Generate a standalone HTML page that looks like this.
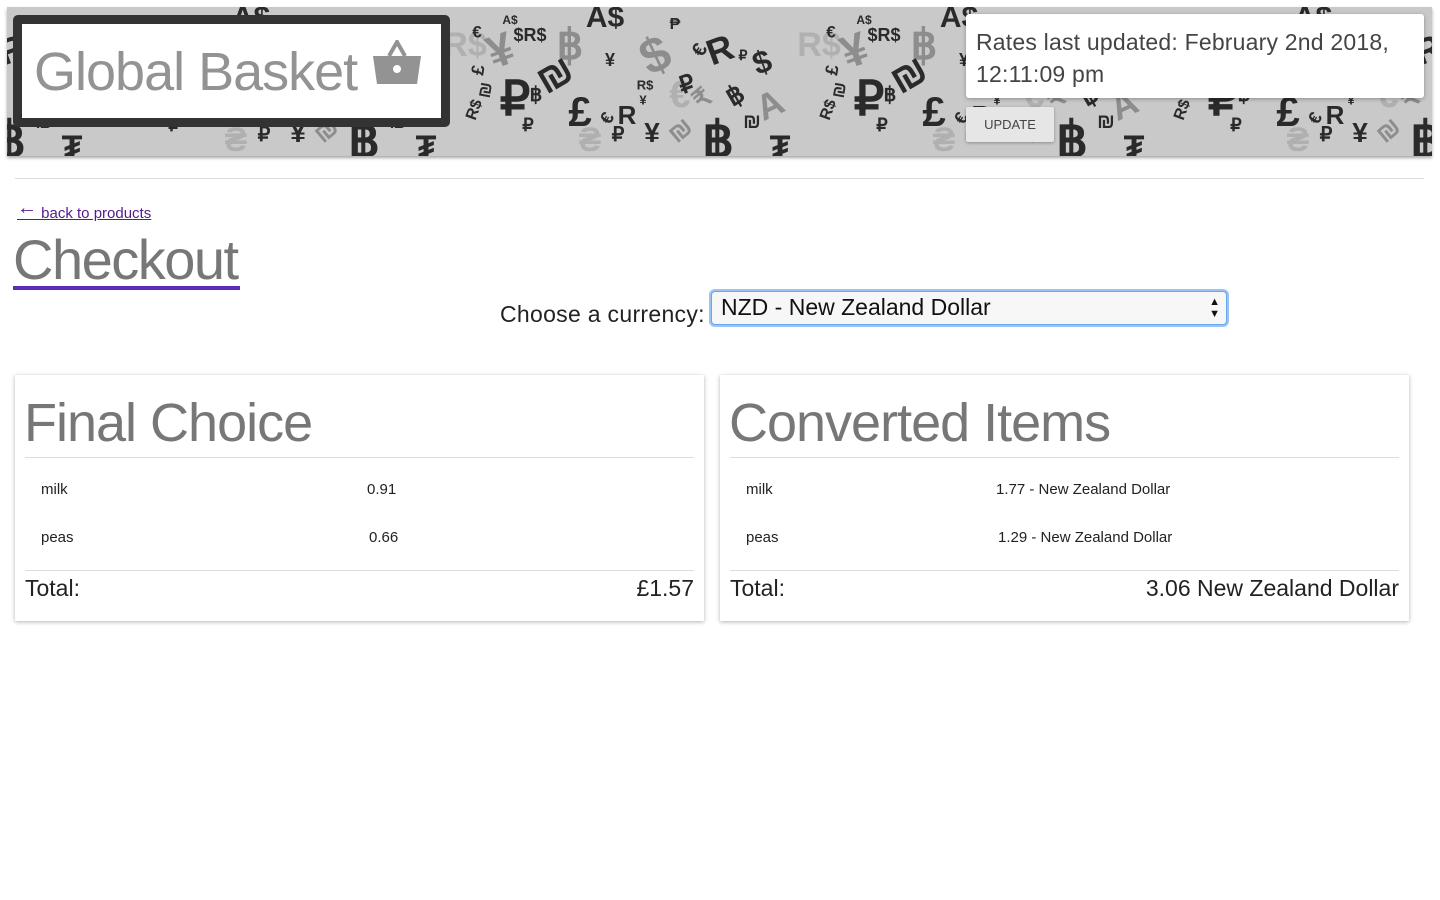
<!DOCTYPE html>
<html><head><meta charset="utf-8">
<style>
*{box-sizing:border-box;margin:0;padding:0}
body{width:1440px;height:900px;background:#fff;font-family:"Liberation Sans",sans-serif;position:relative;overflow:hidden;color:#222}
.hdr{position:absolute;left:7px;top:7px;width:1425px;height:149px;background:#c9c9c9;overflow:hidden;box-shadow:0 2px 3px rgba(0,0,0,.35)}
.tile{position:absolute;top:-7px;width:354px;height:160px}
.tile span{position:absolute;line-height:1;transform:translate(-50%,-50%);font-weight:bold;white-space:nowrap}
.d{color:#2a2a2a}.g{color:#8d8d8d}.l{color:#b0b0b0}
.title{position:absolute;left:13px;top:15px;width:437px;height:112px;border:9px solid #333;border-radius:5px;background:#fff}
.title .t{position:absolute;left:12px;top:16px;font-size:54px;color:#939393;letter-spacing:-1px}
.rates{position:absolute;left:966px;top:14px;width:458px;height:84px;background:#fff;border-radius:3px;box-shadow:0 1px 4px rgba(0,0,0,.3);padding:12px 10px;font-size:23px;line-height:32px;color:#444;letter-spacing:.2px}
.upd{position:absolute;left:966px;top:107px;width:88px;height:35px;background:#e6e6e6;border-radius:2px;box-shadow:0 1px 3px rgba(0,0,0,.3);font-size:13px;color:#444;text-align:center;line-height:35px}
.hr{position:absolute;height:1px;background:#ddd}
a{color:#551a8b}
.back{position:absolute;left:17px;top:201px;font-size:15px}
.back span{position:relative;top:-4px}
.chk{position:absolute;left:13px;top:231px;font-size:56px;color:#777;line-height:58px;letter-spacing:-1.5px}
.chk u{position:absolute;left:0;top:55px;width:227px;height:4px;background:#5b2dbf}
.lbl{position:absolute;left:500px;top:301px;font-size:23px;color:#222;letter-spacing:.3px}
.sel{position:absolute;left:711px;top:291px;width:516px;height:34px;border:1px solid #6aa6f0;box-shadow:0 0 0 2px #9cc3f5;border-radius:4px;background:#f7f7f7;font-size:23px;padding:2px 9px;color:#111}
.sel i{position:absolute;right:6px;top:4px;font-style:normal;font-size:11px;line-height:12px;color:#111}
.card{position:absolute;top:375px;width:689px;height:246px;background:#fff;box-shadow:0 1px 4px rgba(0,0,0,.3)}
.card h2{position:absolute;left:9px;top:17px;font-size:54px;font-weight:normal;color:#777;letter-spacing:-1px}
.card .l1{position:absolute;left:10px;right:10px;top:82px;height:1px;background:#ddd}
.card .l2{position:absolute;left:10px;right:10px;top:195px;height:1px;background:#ddd}
.card .c{position:absolute;font-size:15px;color:#222}
.card .tot{position:absolute;top:200px;font-size:23px;color:#222}
</style></head><body>
<div class="hdr">
<div class="tile" style="left:-275px">
<span class="l" style="left:25px;top:45px;font-size:34px">R$</span><span class="g" style="left:60px;top:50px;font-size:46px;transform:translate(-50%,-50%) rotate(-20deg)">¥</span><span class="d" style="left:37px;top:32px;font-size:17px">€</span><span class="d" style="left:70px;top:20px;font-size:12px">A$</span><span class="d" style="left:90px;top:35px;font-size:18px">$R$</span><span class="g" style="left:130px;top:45px;font-size:42px">฿</span><span class="d" style="left:115px;top:75px;font-size:40px;transform:translate(-50%,-50%) rotate(-30deg)">₪</span><span class="d" style="left:170px;top:60px;font-size:18px">¥</span><span class="d" style="left:165px;top:18px;font-size:30px">A$</span><span class="g" style="left:215px;top:55px;font-size:50px;transform:translate(-50%,-50%) rotate(-25deg)">$</span><span class="d" style="left:235px;top:25px;font-size:16px">₱</span><span class="d" style="left:260px;top:50px;font-size:20px;transform:translate(-50%,-50%) rotate(-60deg)">€</span><span class="d" style="left:280px;top:50px;font-size:36px;transform:translate(-50%,-50%) rotate(-20deg)">R</span><span class="d" style="left:303px;top:55px;font-size:14px">₽</span><span class="d" style="left:322px;top:62px;font-size:32px;transform:translate(-50%,-50%) rotate(-20deg)">$</span><span class="l" style="left:240px;top:95px;font-size:38px">€</span><span class="d" style="left:75px;top:100px;font-size:48px">₽</span><span class="d" style="left:96px;top:95px;font-size:20px">฿</span><span class="d" style="left:140px;top:112px;font-size:42px">£</span><span class="d" style="left:38px;top:70px;font-size:18px;transform:translate(-50%,-50%) rotate(-80deg)">£</span><span class="d" style="left:45px;top:90px;font-size:18px;transform:translate(-50%,-50%) rotate(-80deg)">₪</span><span class="d" style="left:35px;top:110px;font-size:16px;transform:translate(-50%,-50%) rotate(-70deg)">R$</span><span class="d" style="left:205px;top:85px;font-size:13px">R$</span><span class="d" style="left:203px;top:100px;font-size:13px">¥</span><span class="d" style="left:187px;top:115px;font-size:26px">R</span><span class="d" style="left:167px;top:118px;font-size:18px;transform:translate(-50%,-50%) rotate(-60deg)">€</span><span class="d" style="left:247px;top:85px;font-size:24px;transform:translate(-50%,-50%) rotate(-20deg)">₽</span><span class="g" style="left:262px;top:98px;font-size:26px;transform:translate(-50%,-50%) rotate(-40deg)">₹</span><span class="d" style="left:295px;top:95px;font-size:26px;transform:translate(-50%,-50%) rotate(-30deg)">฿</span><span class="d" style="left:278px;top:140px;font-size:50px">฿</span><span class="d" style="left:312px;top:122px;font-size:20px">₪</span><span class="g" style="left:240px;top:130px;font-size:26px;transform:translate(-50%,-50%) rotate(-40deg)">₪</span><span class="d" style="left:212px;top:133px;font-size:28px">¥</span><span class="d" style="left:178px;top:135px;font-size:20px">₽</span><span class="d" style="left:88px;top:125px;font-size:18px">₽</span><span class="d" style="left:340px;top:148px;font-size:34px">₮</span><span class="g" style="left:330px;top:105px;font-size:36px;transform:translate(-50%,-50%) rotate(-25deg)">A</span><span class="l" style="left:150px;top:140px;font-size:34px">₴</span>
</div>
</div>
<div class="title"><div class="t">Global Basket <svg width="52" height="46" viewBox="0 0 52 46" style="vertical-align:4px"><path d="M18 16 L26 2 L34 16" stroke="#939393" stroke-width="4" fill="none"/><path d="M2 16 H50 L46 44 H6 Z" fill="#939393"/><circle cx="26" cy="29" r="4" fill="#fff"/></svg></div></div>
<div class="rates">Rates last updated: February 2nd 2018, 12:11:09 pm</div>
<div class="upd">UPDATE</div>
<div class="hr" style="left:15px;top:178px;width:1409px"></div>
<a class="back" href="#"><span style="font-size:20px">←</span> back to products</a>
<div class="chk">Checkout<u></u></div>
<div class="lbl">Choose a currency:</div>
<div class="sel">NZD - New Zealand Dollar<i>▲<br>▼</i></div>
<div class="card" style="left:15px"><h2>Final Choice</h2><div class="l1"></div>
<div class="c" style="left:26px;top:106px">milk</div><div class="c" style="left:352px;top:106px">0.91</div>
<div class="c" style="left:26px;top:154px">peas</div><div class="c" style="left:354px;top:154px">0.66</div>
<div class="l2"></div><div class="tot" style="left:10px">Total:</div><div class="tot" style="right:10px">£1.57</div></div>
<div class="card" style="left:720px"><h2>Converted Items</h2><div class="l1"></div>
<div class="c" style="left:26px;top:106px">milk</div><div class="c" style="left:276px;top:106px">1.77 - New Zealand Dollar</div>
<div class="c" style="left:26px;top:154px">peas</div><div class="c" style="left:278px;top:154px">1.29 - New Zealand Dollar</div>
<div class="l2"></div><div class="tot" style="left:10px">Total:</div><div class="tot" style="right:10px">3.06 New Zealand Dollar</div></div>
<script>
var t=document.querySelector('.tile');var h=document.querySelector('.hdr');
[79,433,787,1141].forEach(function(x){var c=t.cloneNode(true);c.style.left=x+'px';h.appendChild(c);});
h.appendChild(document.querySelector('.title'));h.appendChild(document.querySelector('.rates'));h.appendChild(document.querySelector('.upd'));
['.title','.rates','.upd'].forEach(function(s){var e=document.querySelector(s);e.style.left=(parseInt(getComputedStyle(e).left)-7)+'px';e.style.top=(parseInt(getComputedStyle(e).top)-7)+'px';});
</script>
</body></html>
